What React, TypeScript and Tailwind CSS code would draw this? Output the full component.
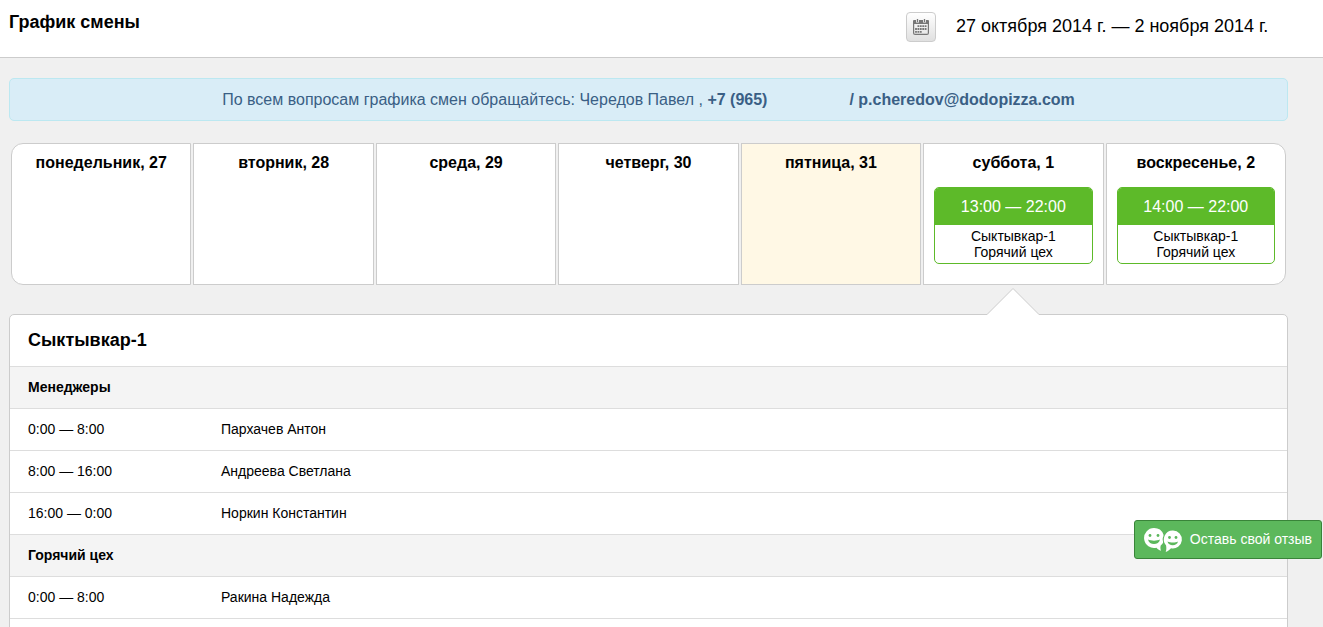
import clsx from 'clsx';

interface Shift {
  time: string;
  unit: string;
  station: string;
}

interface Day {
  label: string;
  today?: boolean;
  selected?: boolean;
  shift?: Shift;
}

interface Group {
  title: string;
  rows: { time: string; name: string }[];
}

const days: Day[] = [
  { label: 'понедельник, 27' },
  { label: 'вторник, 28' },
  { label: 'среда, 29' },
  { label: 'четверг, 30' },
  { label: 'пятница, 31', today: true },
  {
    label: 'суббота, 1',
    selected: true,
    shift: { time: '13:00 — 22:00', unit: 'Сыктывкар-1', station: 'Горячий цех' },
  },
  {
    label: 'воскресенье, 2',
    shift: { time: '14:00 — 22:00', unit: 'Сыктывкар-1', station: 'Горячий цех' },
  },
];

const groups: Group[] = [
  {
    title: 'Менеджеры',
    rows: [
      { time: '0:00 — 8:00', name: 'Пархачев Антон' },
      { time: '8:00 — 16:00', name: 'Андреева Светлана' },
      { time: '16:00 — 0:00', name: 'Норкин Константин' },
    ],
  },
  {
    title: 'Горячий цех',
    rows: [{ time: '0:00 — 8:00', name: 'Ракина Надежда' }],
  },
];

function CalendarIcon() {
  return (
    <svg width="16" height="16" viewBox="0 0 16 16" fill="none" aria-hidden="true">
      <path d="M1 1h14a1 1 0 0 1 1 1v3H0V2a1 1 0 0 1 1-1z" fill="#777" />
      <path d="M4.500 0v3.500M11.500 0v3.500" stroke="#f4f4f4" strokeWidth="3" />
      <path d="M4.500 0v3M11.500 0v3" stroke="#777" strokeWidth="1.300" />
      <path d="M.6 4.500v9.400a1.500 1.500 0 0 0 1.500 1.500h11.800a1.500 1.500 0 0 0 1.500-1.500V4.500" stroke="#777" strokeWidth="1.200" />
      <path
        d="M4.500 7.200H14M2.100 10H14M2.100 12.800h7"
        stroke="#777"
        strokeWidth="1.800"
        strokeDasharray="1.800 .6"
      />
    </svg>
  );
}

function SmileysIcon() {
  return (
    <svg width="40" height="26" viewBox="0 0 40 26" aria-hidden="true">
      <path
        d="M11 1a10 10 0 1 0 2.500 19.700c1 1.300 2.500 2.300 4.500 3 -.6-1.500-.8-3-.3-5.200A10 10 0 0 0 11 1z"
        fill="#fff"
      />
      <path
        d="M30 3.500a9 9 0 1 1-2 17.800c-1.200 1.500-2.800 2.700-5.300 3.700.7-2 .8-3.600.4-6.500A9 9 0 0 1 30 3.500z"
        fill="#fff"
        stroke="#5cb85c"
        strokeWidth="2"
        paintOrder="stroke"
      />
      <g fill="#5cb85c">
        <circle cx="7" cy="8.500" r="1.400" />
        <circle cx="15" cy="8.500" r="1.400" />
        <circle cx="26.500" cy="10.500" r="1.400" />
        <circle cx="33" cy="10.500" r="1.400" />
        <path d="M5 12.500c3 1.500 9 1.500 12 0-1 6-11 6-12 0z" />
        <path d="M24.500 14.500c3 1.300 8 1.300 10.500 0-1 5-9.500 5-10.500 0z" />
      </g>
    </svg>
  );
}

function DayCard({ day }: { day: Day }) {
  return (
    <div
      className={clsx(
        'relative h-[142px] border border-[#ccc] px-2.5 pt-2 text-center first:rounded-l-xl last:rounded-r-xl',
        day.today ? 'bg-[#fff8e5]' : 'bg-white',
      )}
    >
      <h2 className="text-base leading-[22px] font-bold">{day.label}</h2>
      {day.shift && (
        <button className="mt-[13px] block w-full overflow-hidden rounded-[5px] border border-[#5dba29] bg-white">
          <span className="block h-[37px] bg-[#5dba29] text-base leading-[37px] text-white">
            {day.shift.time}
          </span>
          <span className="block pt-[3px] pb-[3px] text-sm leading-4">
            {day.shift.unit}
            <br />
            {day.shift.station}
          </span>
        </button>
      )}
      {/* Pointer from the selected day to the panel */}
      {day.selected && (
        <svg
          className="absolute top-full left-1/2 z-10 mt-1 -translate-x-1/2"
          width="52"
          height="28"
          viewBox="0 0 52 28"
          aria-hidden="true"
        >
          <path d="M0 28V26.500L26 .5l26 26V28z" fill="#fff" />
          <path d="M0 26.500L26 .5l26 26" fill="none" stroke="#ccc" />
        </svg>
      )}
    </div>
  );
}

function StaffTable() {
  return (
    <table className="w-full table-fixed text-left text-sm leading-5">
      <colgroup>
        <col className="w-[192px]" />
        <col />
      </colgroup>
      {groups.map(group => (
        <tbody key={group.title}>
          <tr className="h-[42px] border-t border-[#ddd] bg-[#f4f4f4]">
            <th colSpan={2} className="pb-0.5 pl-[18px] font-bold">{group.title}</th>
          </tr>
          {group.rows.map(row => (
            <tr key={row.name} className="h-[42px] border-t border-[#ddd]">
              <td className="pb-0.5 pl-[18px]">{row.time}</td>
              <td className="pb-0.5 pl-[19px]">{row.name}</td>
            </tr>
          ))}
        </tbody>
      ))}
      <tfoot>
        <tr className="h-[42px] border-t border-[#ddd]">
          <td colSpan={2} />
        </tr>
      </tfoot>
    </table>
  );
}

export default function App() {
  return (
    <div className="h-screen overflow-hidden bg-[#f0f0f0] font-['Liberation_Sans',Arial,sans-serif] text-black">
      <header className="flex h-[58px] items-start justify-between border-b border-[#ccc] bg-white pr-[50px] pl-[9px]">
        <h1 className="pt-2.5 text-lg leading-6 font-bold">График смены</h1>
        <div className="flex items-center gap-5 pt-3">
          <button
            aria-label="Выбрать период"
            className="flex size-[30px] items-center justify-center rounded border border-[#ccc] bg-linear-to-b from-white to-[#e0e0e0]"
          >
            <CalendarIcon />
          </button>
          <span className="min-w-[317px] pb-0.5 text-lg leading-6">
            27 октября 2014 г. — 2 ноября 2014 г.
          </span>
        </div>
      </header>

      <main className="pt-5 pr-[35px] pl-[9px]">
        <p className="rounded-[5px] border border-[#bce8f1] bg-[#d9edf7] py-2.5 text-center text-base leading-[21px] text-[#3a5f85]">
          По всем вопросам графика смен обращайтесь: Чередов Павел ,{' '}
          <strong>
            +7 (965)
            <span className="inline-block w-[82px]" />
            / p.cheredov@dodopizza.com
          </strong>
        </p>

        <section className="mx-[2px] mt-[22px] grid grid-cols-7 gap-[2px]">
          {days.map(day => (
            <DayCard key={day.label} day={day} />
          ))}
        </section>

        <section className="mt-[29px] overflow-hidden rounded-t-[5px] border border-[#ccc] bg-white">
          <h2 className="px-[18px] py-[13px] text-lg leading-[25px] font-bold">Сыктывкар-1</h2>
          <StaffTable />
        </section>
      </main>

      <button className="fixed right-px bottom-[68px] z-20 flex h-[39px] items-center gap-[7px] rounded-[3px] border border-[#398439] bg-[#5cb85c] pr-[9px] pl-2 text-sm leading-5 text-white">
        <SmileysIcon />
        <span className="pb-0.5">Оставь свой отзыв</span>
      </button>
    </div>
  );
}
